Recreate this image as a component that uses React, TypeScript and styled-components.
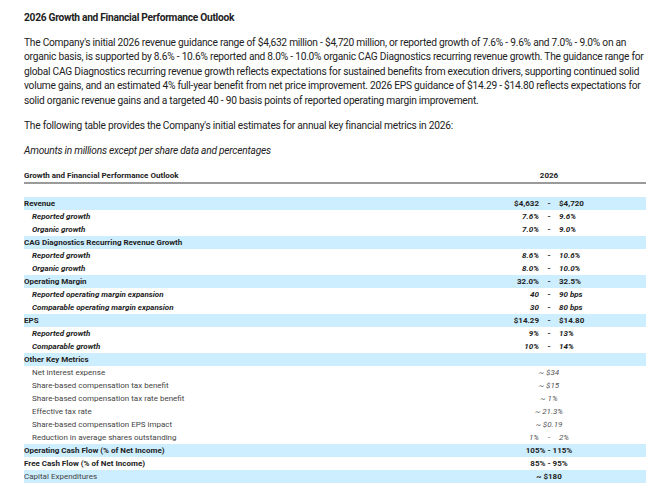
import React from "react";
import styled, { createGlobalStyle } from "styled-components";

const Global = createGlobalStyle`
  html, body { margin: 0; padding: 0; background: #fff; }
  body { font-family: Roboto, "Liberation Sans", sans-serif; color: #222; }
`;

const Page = styled.div`
  padding: 10px 24px 0 24px;
  width: 622px;
`;

const Title = styled.h2`
  font-size: 10.2px;
  letter-spacing: -0.28px;
  font-weight: 700;
  margin: 0 0 9.5px 0;
  line-height: 16px;
`;

const Para = styled.p<{ $italic?: boolean }>`
  font-size: 10.2px;
  letter-spacing: -0.24px;
  line-height: 14.5px;
  margin: 0 0 10.5px 0;
  font-style: ${(p) => (p.$italic ? "italic" : "normal")};
`;

const Table = styled.div`
  margin-top: 10px;
  font-size: 8px;
  display: flex;
  flex-direction: column;
`;

const Row = styled.div<{ $band?: boolean }>`
  display: grid;
  grid-template-columns: 1fr 60px 20px 60px 27px;
  height: 13px;
  align-items: center;
  background: ${(p) => (p.$band ? "#cdeefe" : "transparent")};
`;

const HeaderRow = styled(Row)`
  height: 13px;
  border-bottom: 2px solid #9a9a9a;
  font-weight: 700;
`;

const Spacer = styled.div`
  height: 13px;
`;

const Label = styled.div<{ $indent?: boolean; $bold?: boolean; $italic?: boolean; $muted?: boolean }>`
  padding-left: ${(p) => (p.$indent ? "8px" : "0")};
  font-weight: ${(p) => (p.$bold ? 700 : 400)};
  font-style: ${(p) => (p.$italic ? "italic" : "normal")};
  color: ${(p) => (p.$muted ? "#444" : "#222")};
  white-space: nowrap;
`;

const Cell = styled.div<{ $align: "left" | "right" | "center"; $bold?: boolean; $italic?: boolean; $muted?: boolean }>`
  text-align: ${(p) => p.$align};
  font-weight: ${(p) => (p.$bold ? 700 : 400)};
  font-style: ${(p) => (p.$italic ? "italic" : "normal")};
  color: ${(p) => (p.$muted ? "#555" : "#222")};
  white-space: nowrap;
`;

const Merged = styled(Cell)`
  grid-column: 2 / 5;
`;

type R = {
  label: string;
  band?: boolean;
  indent?: boolean;
  labelBold?: boolean;
  labelItalic?: boolean;
  labelMuted?: boolean;
  range?: [string, string];
  single?: string;
  valBold?: boolean;
  valItalic?: boolean;
  valMuted?: boolean;
};

const rows: R[] = [
  { label: "Revenue", band: true, labelBold: true, range: ["$4,632", "$4,720"], valBold: true },
  { label: "Reported growth", indent: true, labelBold: true, labelItalic: true, range: ["7.6%", "9.6%"], valBold: true, valItalic: true },
  { label: "Organic growth", indent: true, labelBold: true, labelItalic: true, range: ["7.0%", "9.0%"], valBold: true, valItalic: true },
  { label: "CAG Diagnostics Recurring Revenue Growth", band: true, labelBold: true },
  { label: "Reported growth", indent: true, labelBold: true, labelItalic: true, range: ["8.6%", "10.6%"], valBold: true, valItalic: true },
  { label: "Organic growth", indent: true, labelBold: true, labelItalic: true, range: ["8.0%", "10.0%"], valBold: true, valItalic: true },
  { label: "Operating Margin", band: true, labelBold: true, range: ["32.0%", "32.5%"], valBold: true },
  { label: "Reported operating margin expansion", indent: true, labelBold: true, labelItalic: true, range: ["40", "90 bps"], valBold: true, valItalic: true },
  { label: "Comparable operating margin expansion", indent: true, labelBold: true, labelItalic: true, range: ["30", "80 bps"], valBold: true, valItalic: true },
  { label: "EPS", band: true, labelBold: true, range: ["$14.29", "$14.80"], valBold: true },
  { label: "Reported growth", indent: true, labelBold: true, labelItalic: true, range: ["9%", "13%"], valBold: true, valItalic: true },
  { label: "Comparable growth", indent: true, labelBold: true, labelItalic: true, range: ["10%", "14%"], valBold: true, valItalic: true },
  { label: "Other Key Metrics", band: true, labelBold: true },
  { label: "Net interest expense", indent: true, labelMuted: true, single: "~ $34", valItalic: true, valMuted: true },
  { label: "Share-based compensation tax benefit", indent: true, labelMuted: true, single: "~ $15", valItalic: true, valMuted: true },
  { label: "Share-based compensation tax rate benefit", indent: true, labelMuted: true, single: "~ 1%", valItalic: true, valMuted: true },
  { label: "Effective tax rate", indent: true, labelMuted: true, single: "~ 21.3%", valItalic: true, valMuted: true },
  { label: "Share-based compensation EPS impact", indent: true, labelMuted: true, single: "~ $0.19", valItalic: true, valMuted: true },
  { label: "Reduction in average shares outstanding", indent: true, labelMuted: true, range: ["1%", "2%"], valItalic: true, valMuted: true },
  { label: "Operating Cash Flow (% of Net Income)", band: true, labelBold: true, single: "105% - 115%", valBold: true },
  { label: "Free Cash Flow (% of Net Income)", labelBold: true, single: "85% - 95%", valBold: true },
  { label: "Capital Expenditures", band: true, labelMuted: true, single: "~ $180", valBold: true },
];

export default function App() {
  return (
    <Page>
      <Global />
      <Title>2026 Growth and Financial Performance Outlook</Title>
      <Para>
        The Company's initial 2026 revenue guidance range of $4,632 million - $4,720 million, or reported growth of 7.6% - 9.6% and 7.0% - 9.0% on an
        <br />
        organic basis, is supported by 8.6% - 10.6% reported and 8.0% - 10.0% organic CAG Diagnostics recurring revenue growth. The guidance range for
        <br />
        global CAG Diagnostics recurring revenue growth reflects expectations for sustained benefits from execution drivers, supporting continued solid
        <br />
        volume gains, and an estimated 4% full-year benefit from net price improvement. 2026 EPS guidance of $14.29 - $14.80 reflects expectations for
        <br />
        solid organic revenue gains and a targeted 40 - 90 basis points of reported operating margin improvement.
      </Para>
      <Para>The following table provides the Company's initial estimates for annual key financial metrics in 2026:</Para>
      <Para $italic>Amounts in millions except per share data and percentages</Para>
      <Table>
        <HeaderRow>
          <Label $bold>Growth and Financial Performance Outlook</Label>
          <Merged $align="center" $bold>2026</Merged>
        </HeaderRow>
        <Spacer />
        {rows.map((r, i) => (
          <Row key={i} $band={r.band}>
            <Label $indent={r.indent} $bold={r.labelBold} $italic={r.labelItalic} $muted={r.labelMuted}>
              {r.label}
            </Label>
            {r.range && (
              <>
                <Cell $align="right" $bold={r.valBold} $italic={r.valItalic} $muted={r.valMuted}>{r.range[0]}</Cell>
                <Cell $align="center" $bold={r.valBold} $muted={r.valMuted}>-</Cell>
                <Cell $align="left" $bold={r.valBold} $italic={r.valItalic} $muted={r.valMuted}>{r.range[1]}</Cell>
              </>
            )}
            {r.single && (
              <Merged $align="center" $bold={r.valBold} $italic={r.valItalic} $muted={r.valMuted}>{r.single}</Merged>
            )}
          </Row>
        ))}
      </Table>
    </Page>
  );
}
